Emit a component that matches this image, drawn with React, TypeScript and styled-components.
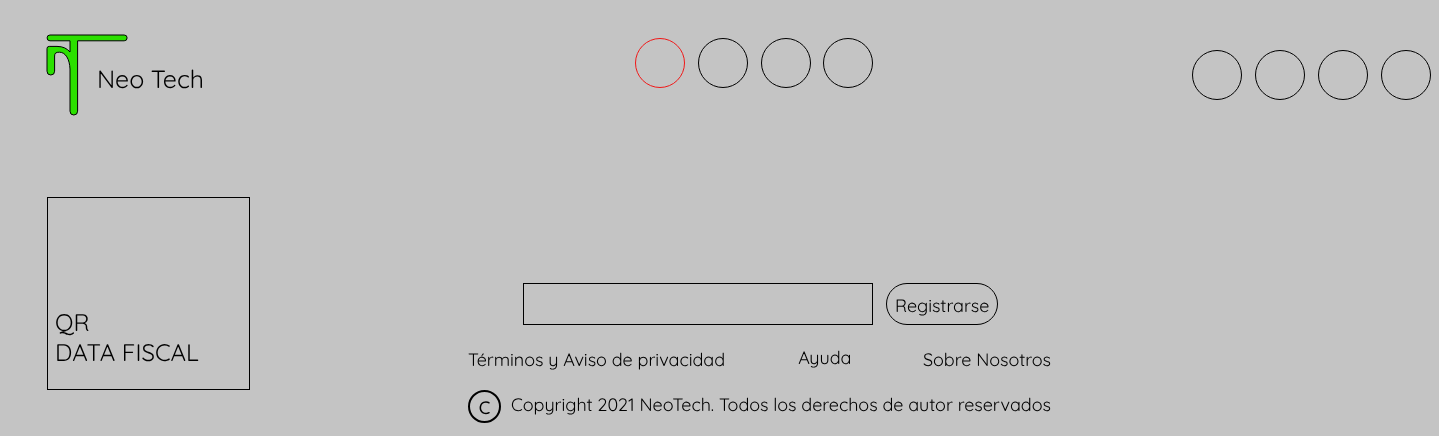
import React from "react";
import styled, { createGlobalStyle } from "styled-components";

const GlobalStyle = createGlobalStyle`
  * { box-sizing: border-box; }
  body {
    margin: 0;
    background: #c4c4c4;
    color: #000;
    font-family: Quicksand, Lato, sans-serif;
    text-rendering: geometricPrecision;
    overflow: hidden;
  }
`;

const Footer = styled.footer`
  display: grid;
  grid-template-columns: 421px 583px 1fr;
  height: 436px;
  padding-left: 47px;
  will-change: transform;
`;

const BrandColumn = styled.div`
  display: flex;
  flex-direction: column;
  padding-top: 34px;
`;

const Brand = styled.div`
  display: flex;
  height: 163px;
`;

const Logo = styled.svg`
  flex: none;
  width: 82px;
  height: 82px;
  margin-left: -1px;
`;

const Text = styled.span<{ $size?: number; $spacing?: number }>`
  display: block;
  font-size: ${(p) => p.$size ?? 18}px;
  line-height: ${(p) => ((p.$size ?? 18) > 20 ? 30 : 22)}px;
  letter-spacing: ${(p) => p.$spacing ?? -0.05}px;
  font-weight: 400;
  white-space: nowrap;
`;

const BrandName = styled(Text)`
  margin: 31px 0 0 -31px;
`;

const QrBox = styled.div`
  display: flex;
  flex-direction: column;
  justify-content: flex-end;
  width: 203px;
  height: 193px;
  padding: 0 0 22px 7px;
  border: 1px solid #000;
`;

const CenterColumn = styled.div`
  display: flex;
  flex-direction: column;
  padding-top: 38px;
`;

const Circles = styled.div<{ $gap: number }>`
  display: flex;
  gap: ${(p) => p.$gap}px;
`;

const CenterCircles = styled(Circles)`
  margin: 0 0 195px 167px;
`;

const SideCircles = styled(Circles)`
  justify-content: flex-end;
  padding: 50px 8px 0 0;
`;

const Circle = styled.span<{ $color?: string }>`
  flex: none;
  width: 50px;
  height: 50px;
  border: 1px solid ${(p) => p.$color ?? "#000"};
  border-radius: 50%;
`;

const SignUp = styled.form`
  display: flex;
  gap: 13px;
  margin-left: 55px;
`;

const EmailInput = styled.input`
  width: 350px;
  height: 42px;
  padding: 0 10px;
  border: 1px solid #000;
  border-radius: 0;
  background: transparent;
  font: inherit;
  outline: none;
`;

const SubmitButton = styled.button`
  display: flex;
  width: 112px;
  height: 42px;
  padding: 11px 0 0 8px;
  border: 1px solid #000;
  border-radius: 21px;
  background: transparent;
  color: inherit;
  font-family: inherit;
  text-rendering: inherit;
`;

const Links = styled.nav`
  display: flex;
  justify-content: space-between;
  height: 42px;
  margin-top: 23px;
  padding-top: 1px;
`;

const HelpLink = styled(Text)`
  margin: -2px 0 0 1.5px;
`;

const Legal = styled.div`
  display: flex;
  gap: 10px;
`;

const CopyrightMark = styled.span`
  display: flex;
  flex: none;
  justify-content: center;
  width: 33px;
  height: 33px;
  padding-top: 5px;
  border: 2px solid #000;
  border-radius: 50%;
`;

const MarkLetter = styled(Text)`
  font-weight: 500;
`;

const LegalText = styled(Text)`
  margin-top: 4px;
`;

export default function App() {
  return (
    <>
      <GlobalStyle />
      <Footer>
        <BrandColumn>
          <Brand>
            <Logo viewBox="46 34 82 82" aria-label="Neo Tech">
              <path
                d="M50 35H124.2A2.9 2.9 0 0 1 124.2 40.8H77.6V111.2A3.8 3.8 0 0 1 70 111.2V69C69.6 59 65.5 52.2 59.5 52.2C56 52.2 54.6 53 54.6 56V71.2A3.8 3.8 0 0 1 47 71.2V48.5Q47 46.4 49.2 46.4H57C63 46.4 67 48.5 70 52V40.8H50A2.9 2.9 0 0 1 50 35Z"
                fill="#2be000"
                stroke="#000"
                strokeWidth="1"
              />
            </Logo>
            <BrandName $size={25} $spacing={-0.1}>Neo Tech</BrandName>
          </Brand>
          <QrBox>
            <Text $size={24} $spacing={0}>QR</Text>
            <Text $size={24} $spacing={0}>DATA FISCAL</Text>
          </QrBox>
        </BrandColumn>
        <CenterColumn>
          <CenterCircles $gap={12.8}>
            <Circle $color="#f01818" />
            <Circle />
            <Circle />
            <Circle />
          </CenterCircles>
          <SignUp>
            <EmailInput aria-label="Email" />
            <SubmitButton type="button">
              <Text>Registrarse</Text>
            </SubmitButton>
          </SignUp>
          <Links>
            <Text>Términos y Aviso de privacidad</Text>
            <HelpLink>Ayuda</HelpLink>
            <Text>Sobre Nosotros</Text>
          </Links>
          <Legal>
            <CopyrightMark>
              <MarkLetter>C</MarkLetter>
            </CopyrightMark>
            <LegalText>
              Copyright 2021 NeoTech. Todos los derechos de autor reservados
            </LegalText>
          </Legal>
        </CenterColumn>
        <SideCircles $gap={13}>
          <Circle />
          <Circle />
          <Circle />
          <Circle />
        </SideCircles>
      </Footer>
    </>
  );
}
